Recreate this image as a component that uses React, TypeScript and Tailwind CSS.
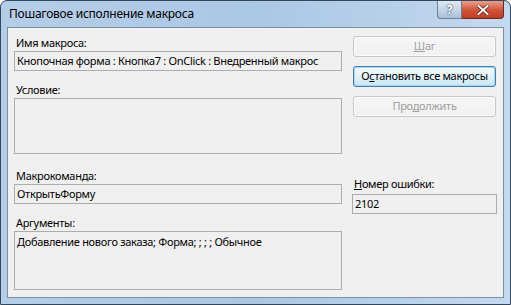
import React from "react";

const font = { fontFamily: '"Noto Sans", "Open Sans", sans-serif' };

function Label({ children, className = "" }: { children: React.ReactNode; className?: string }) {
  return <div className={`h-[16px] leading-[16px] text-[11px] tracking-[-0.3px] text-black pl-[2px] whitespace-nowrap ${className}`}>{children}</div>;
}

function Box({ children, className = "" }: { children?: React.ReactNode; className?: string }) {
  return (
    <div className={`border border-[#abadb3] bg-[#f0f0f0] text-[11px] tracking-[-0.3px] text-black px-[2px] whitespace-nowrap overflow-hidden ${className}`}>
      {children}
    </div>
  );
}

function Btn({ children, disabled, def, className = "" }: { children: React.ReactNode; disabled?: boolean; def?: boolean; className?: string }) {
  return (
    <div
      className={`h-[21px] w-[143px] ml-[1px] rounded-[3px] border flex items-center justify-center text-[11px] tracking-[-0.3px] whitespace-nowrap ${
        def
          ? "border-[#3c7fb1] bg-gradient-to-b from-[#f2f9fd] via-[#e5f3fb] to-[#c4e5f6] text-black shadow-[inset_0_0_0_1px_#a7d9f5]"
          : "border-[#c5c7c9] bg-gradient-to-b from-[#f6f6f6] to-[#f0f0f0] text-[#a0a0a0] shadow-[inset_0_0_0_1px_#fbfbfb]"
      } ${className}`}
    >
      <span>{children}</span>
    </div>
  );
}

export default function App() {
  return (
    <div className="w-[511px] h-[305px] overflow-hidden bg-white" style={font}>
      <div className="w-[511px] h-[305px] flex flex-col border border-[#34465a] rounded-t-[7px] bg-gradient-to-r from-[#b5cee8] via-[#aac7e4] to-[#c3d9ef]">
        <div className="h-[26px] flex items-start justify-between">
          <div className="pl-[8px] pt-[5px] text-[12px] tracking-[-0.25px] leading-[16px] text-black whitespace-nowrap">Пошаговое исполнение макроса</div>
          <div className="flex mr-[6px]">
            <div className="w-[25px] h-[18px] border border-[#6d7f93] border-t-0 rounded-bl-[4px] bg-gradient-to-b from-[#dfe9f3] via-[#c6d7e9] to-[#a9bfd7] flex items-center justify-center text-[12px] font-bold text-white" style={{ textShadow: "0 0 2px #33475f, 0 0 1px #33475f" }}>
              ?
            </div>
            <div className="w-[42px] h-[18px] border border-[#6b2a1f] border-t-0 border-l-0 rounded-br-[4px] bg-gradient-to-b from-[#e7a08d] via-[#d2573c] to-[#c23b1f] flex items-center justify-center">
              <svg width="12" height="10" viewBox="0 0 12 10">
                <path d="M1.5 1 L10.5 9 M10.5 1 L1.5 9" stroke="#5b1a10" strokeWidth="3.4" strokeLinecap="square" />
                <path d="M1.5 1 L10.5 9 M10.5 1 L1.5 9" stroke="#ffffff" strokeWidth="2" strokeLinecap="square" />
              </svg>
            </div>
          </div>
        </div>
        <div className="mx-[6px] h-[271px] border border-[#7f8fa3] bg-[#f0f0f0] flex">
          <div className="w-[335px] pl-[6px] pt-[7px] flex flex-col">
            <Label>Имя макроса:</Label>
            <Box className="h-[20px] leading-[18px] w-[328px]">Кнопочная форма : Кнопка7 : OnClick : Внедренный макрос</Box>
            <Label className="mt-[11px]">Условие:</Label>
            <Box className="h-[56px] w-[328px]" />
            <Label className="mt-[14px]">Макрокоманда:</Label>
            <Box className="h-[20px] leading-[18px] w-[328px]">ОткрытьФорму</Box>
            <Label className="mt-[11px]">Аргументы:</Label>
            <Box className="h-[59px] w-[328px] pt-[2px] leading-[16px]">Добавление нового заказа; Форма; ; ; ; Обычное</Box>
          </div>
          <div className="pl-[9px] pt-[8px] flex flex-col">
            <Btn disabled>
              <span className="underline">Ш</span>аг
            </Btn>
            <Btn def className="mt-[9px]">
              О<span className="underline">с</span>тановить все макросы
            </Btn>
            <Btn disabled className="mt-[9px]">
              Про<span className="underline">д</span>олжить
            </Btn>
            <Label className="mt-[59px]">
              <span className="underline">Н</span>омер ошибки:
            </Label>
            <Box className="mt-[2px] h-[20px] leading-[18px] w-[145px]">2102</Box>
          </div>
        </div>
      </div>
    </div>
  );
}
